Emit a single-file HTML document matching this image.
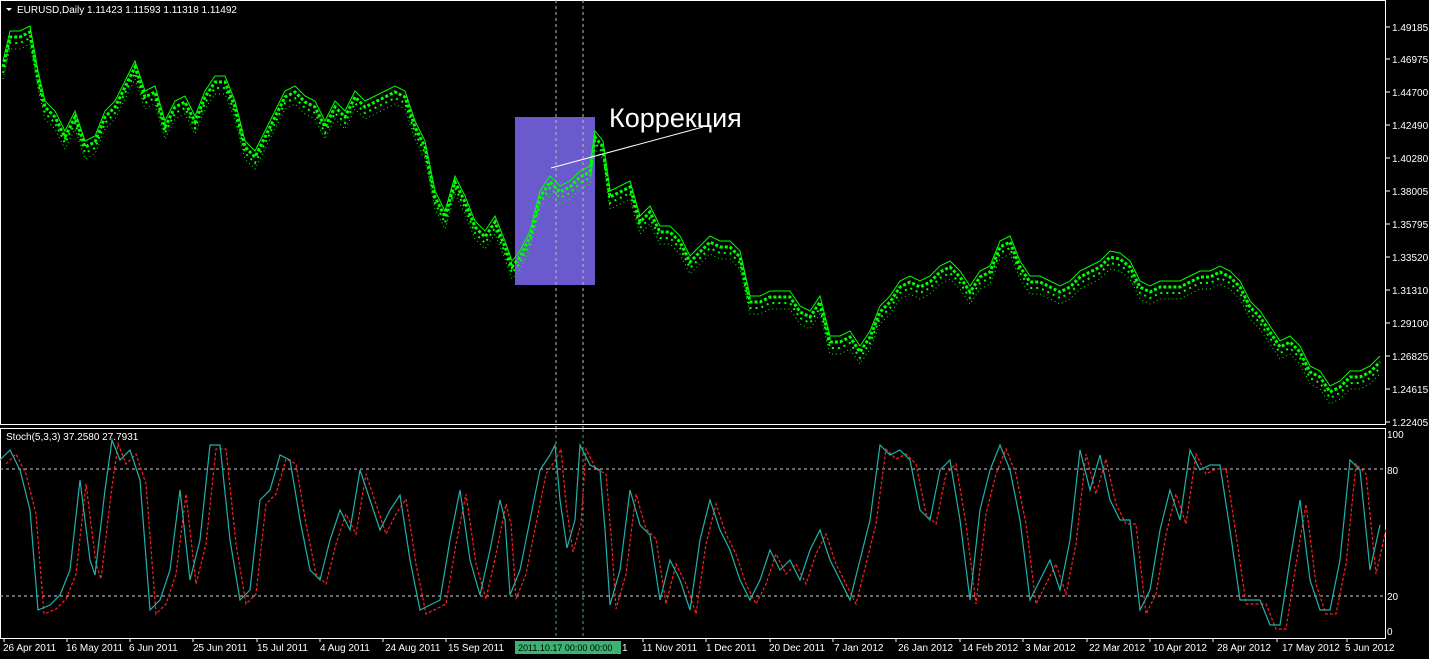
<!DOCTYPE html><html><head><meta charset="utf-8"><style>
html,body{margin:0;padding:0;background:#000;width:1429px;height:659px;overflow:hidden}
svg{display:block}
text{font-family:"Liberation Sans",sans-serif;fill:#fff;font-size:10px}
</style></head><body>
<svg width="1429" height="659" viewBox="0 0 1429 659">
<defs>
<polyline id="pr" fill="none" points="3,70 10,40 20,40 30,35 38,80 45,110 55,120 65,140 75,120 85,150 95,145 105,120 115,110 125,90 135,70 145,100 155,95 165,130 175,110 185,105 195,125 205,100 215,85 225,85 235,110 245,150 255,160 265,140 275,120 285,100 295,95 305,105 315,110 325,130 335,110 345,120 355,100 365,110 375,105 385,100 395,95 405,100 415,130 425,150 435,200 445,220 455,185 465,205 475,230 485,240 495,225 505,250 512,270 520,260 530,240 540,200 550,185 560,195 570,190 580,180 590,175 595,140 603,150 610,200 620,195 630,190 640,225 650,215 660,235 670,235 680,245 690,265 700,255 710,245 720,250 730,250 740,260 750,305 760,305 770,300 780,300 790,300 800,315 810,320 820,305 830,345 840,345 850,340 860,355 870,340 880,315 890,305 900,290 910,285 920,290 930,285 940,275 950,270 960,280 970,295 980,280 990,275 1000,250 1010,245 1020,270 1030,285 1040,285 1050,290 1060,295 1070,290 1080,280 1090,275 1100,270 1110,260 1120,262 1130,270 1140,290 1150,295 1160,290 1170,290 1180,290 1190,285 1200,280 1210,280 1220,275 1230,280 1240,290 1250,310 1260,320 1270,335 1280,350 1290,345 1300,355 1310,375 1320,380 1330,395 1340,390 1350,380 1360,380 1370,375 1380,365"/>
<polyline id="st" fill="none" points="0,460 10,450 20,470 30,510 38,610 50,605 60,595 70,570 80,480 90,560 95,575 105,490 112,440 120,460 130,450 140,480 150,610 160,600 170,570 180,490 190,580 200,540 210,445 220,445 230,540 240,600 250,590 260,500 270,490 280,455 290,460 300,520 310,570 320,580 330,540 340,510 350,530 360,470 370,500 380,530 390,510 400,495 410,560 420,610 430,605 440,600 450,540 460,490 470,560 480,595 490,550 500,500 505,520 510,595 520,570 530,520 540,470 550,455 555,445 560,500 567,548 575,520 580,445 590,465 600,470 605,530 610,605 620,570 630,490 640,525 650,535 660,600 670,560 680,580 690,610 700,540 710,500 720,530 730,550 740,580 750,600 760,580 770,550 780,570 790,560 800,580 810,550 820,530 830,560 840,580 850,600 860,560 870,520 880,445 890,455 900,450 910,460 920,510 930,520 940,470 950,460 960,520 970,600 980,510 990,470 1000,445 1010,470 1020,520 1030,600 1040,580 1050,560 1060,590 1070,540 1080,450 1090,490 1100,455 1110,500 1120,520 1130,520 1140,610 1150,590 1160,530 1170,490 1180,520 1190,450 1200,470 1210,465 1220,465 1230,530 1240,600 1250,600 1260,600 1270,625 1280,625 1290,560 1300,500 1310,580 1320,610 1330,610 1340,560 1350,460 1360,470 1370,570 1380,525"/>
</defs>
<rect width="1429" height="659" fill="#000"/>
<rect x="0.5" y="0.5" width="1385" height="424" fill="none" stroke="#fff"/>
<rect x="0.5" y="428.5" width="1385" height="210" fill="none" stroke="#fff"/>
<g stroke="#fff">
<line x1="1386" y1="27" x2="1390" y2="27"/><line x1="1386" y1="59" x2="1390" y2="59"/><line x1="1386" y1="92" x2="1390" y2="92"/><line x1="1386" y1="125" x2="1390" y2="125"/><line x1="1386" y1="158" x2="1390" y2="158"/><line x1="1386" y1="191" x2="1390" y2="191"/><line x1="1386" y1="224" x2="1390" y2="224"/><line x1="1386" y1="257" x2="1390" y2="257"/><line x1="1386" y1="290" x2="1390" y2="290"/><line x1="1386" y1="323" x2="1390" y2="323"/><line x1="1386" y1="356" x2="1390" y2="356"/><line x1="1386" y1="389" x2="1390" y2="389"/><line x1="1386" y1="422" x2="1390" y2="422"/>
</g>
<g style="font-size:9.5px">
<text x="1392" y="31">1.49185</text><text x="1392" y="63">1.46975</text><text x="1392" y="96">1.44700</text><text x="1392" y="129">1.42490</text><text x="1392" y="162">1.40280</text><text x="1392" y="195">1.38005</text><text x="1392" y="228">1.35795</text><text x="1392" y="261">1.33520</text><text x="1392" y="294">1.31310</text><text x="1392" y="327">1.29100</text><text x="1392" y="360">1.26825</text><text x="1392" y="393">1.24615</text><text x="1392" y="426">1.22405</text>
<text x="1387" y="438">100</text><text x="1387" y="474">80</text><text x="1387" y="600">20</text><text x="1387" y="635">0</text>
</g>
<polygon points="6,8 12,8 9,11" fill="#fff"/>
<text x="17" y="13" font-size="9.5">EURUSD,Daily  1.11423 1.11593 1.11318 1.11492</text>
<text x="6" y="440" font-size="9">Stoch(5,3,3) 37.2580 27.7931</text>
<rect x="515" y="117" width="80" height="168" fill="#6a5acd"/>
<g stroke="#bbb" stroke-dasharray="3,3">
<line x1="556" y1="0" x2="556" y2="428"/><line x1="583" y1="0" x2="583" y2="428"/></g>
<g stroke="#3cb371" stroke-dasharray="3,3">
<line x1="556" y1="429" x2="556" y2="638"/><line x1="583" y1="429" x2="583" y2="638"/></g>
<use href="#pr" stroke="#00ff00" stroke-width="1" transform="translate(0,-9)"/>
<use href="#pr" stroke="#00ff00" stroke-width="1" transform="translate(0,9)" stroke-dasharray="1,3"/>
<use href="#pr" stroke="#00ff00" stroke-width="3" stroke-dasharray="3,2" transform="translate(0,-3)"/>
<use href="#pr" stroke="#00ff00" stroke-width="2" transform="translate(0,3)" stroke-dasharray="2,4"/>
<line x1="551" y1="168" x2="703" y2="127" stroke="#fff" stroke-width="1"/>
<text x="609" y="127" style="font-size:27px">Коррекция</text>
<g stroke="#ccc" stroke-dasharray="3,3"><line x1="0" y1="469" x2="1385" y2="469"/><line x1="0" y1="596" x2="1385" y2="596"/></g>
<use href="#st" stroke="#ff2020" stroke-width="1.2" stroke-dasharray="3,2" transform="translate(6,4)"/>
<use href="#st" stroke="#20b2aa" stroke-width="1.2"/>
<g stroke="#fff"><line x1="4" y1="638" x2="4" y2="642"/><line x1="67" y1="638" x2="67" y2="642"/><line x1="130" y1="638" x2="130" y2="642"/><line x1="193" y1="638" x2="193" y2="642"/><line x1="257" y1="638" x2="257" y2="642"/><line x1="320" y1="638" x2="320" y2="642"/><line x1="383" y1="638" x2="383" y2="642"/><line x1="446" y1="638" x2="446" y2="642"/><line x1="643" y1="638" x2="643" y2="642"/><line x1="706" y1="638" x2="706" y2="642"/><line x1="770" y1="638" x2="770" y2="642"/><line x1="833" y1="638" x2="833" y2="642"/><line x1="896" y1="638" x2="896" y2="642"/><line x1="960" y1="638" x2="960" y2="642"/><line x1="1023" y1="638" x2="1023" y2="642"/><line x1="1087" y1="638" x2="1087" y2="642"/><line x1="1150" y1="638" x2="1150" y2="642"/><line x1="1213" y1="638" x2="1213" y2="642"/><line x1="1277" y1="638" x2="1277" y2="642"/><line x1="1347" y1="638" x2="1347" y2="642"/></g>
<g font-size="9.5">
<text x="3" y="651">26 Apr 2011</text><text x="66" y="651">16 May 2011</text><text x="129" y="651">6 Jun 2011</text><text x="193" y="651">25 Jun 2011</text><text x="257" y="651">15 Jul 2011</text><text x="320" y="651">4 Aug 2011</text><text x="385" y="651">24 Aug 2011</text><text x="448" y="651">15 Sep 2011</text><text x="622" y="651">1</text><text x="642" y="651">11 Nov 2011</text><text x="706" y="651">1 Dec 2011</text><text x="769" y="651">20 Dec 2011</text><text x="834" y="651">7 Jan 2012</text><text x="898" y="651">26 Jan 2012</text><text x="962" y="651">14 Feb 2012</text><text x="1025" y="651">3 Mar 2012</text><text x="1089" y="651">22 Mar 2012</text><text x="1153" y="651">10 Apr 2012</text><text x="1217" y="651">28 Apr 2012</text><text x="1282" y="651">17 May 2012</text><text x="1345" y="651">5 Jun 2012</text>
</g>
<rect x="515" y="641" width="106" height="13" fill="#3cb371"/>
<text x="518" y="651" style="fill:#000;font-size:9px">2011.10.17 00:00  00:00</text>
</svg>
</body></html>
